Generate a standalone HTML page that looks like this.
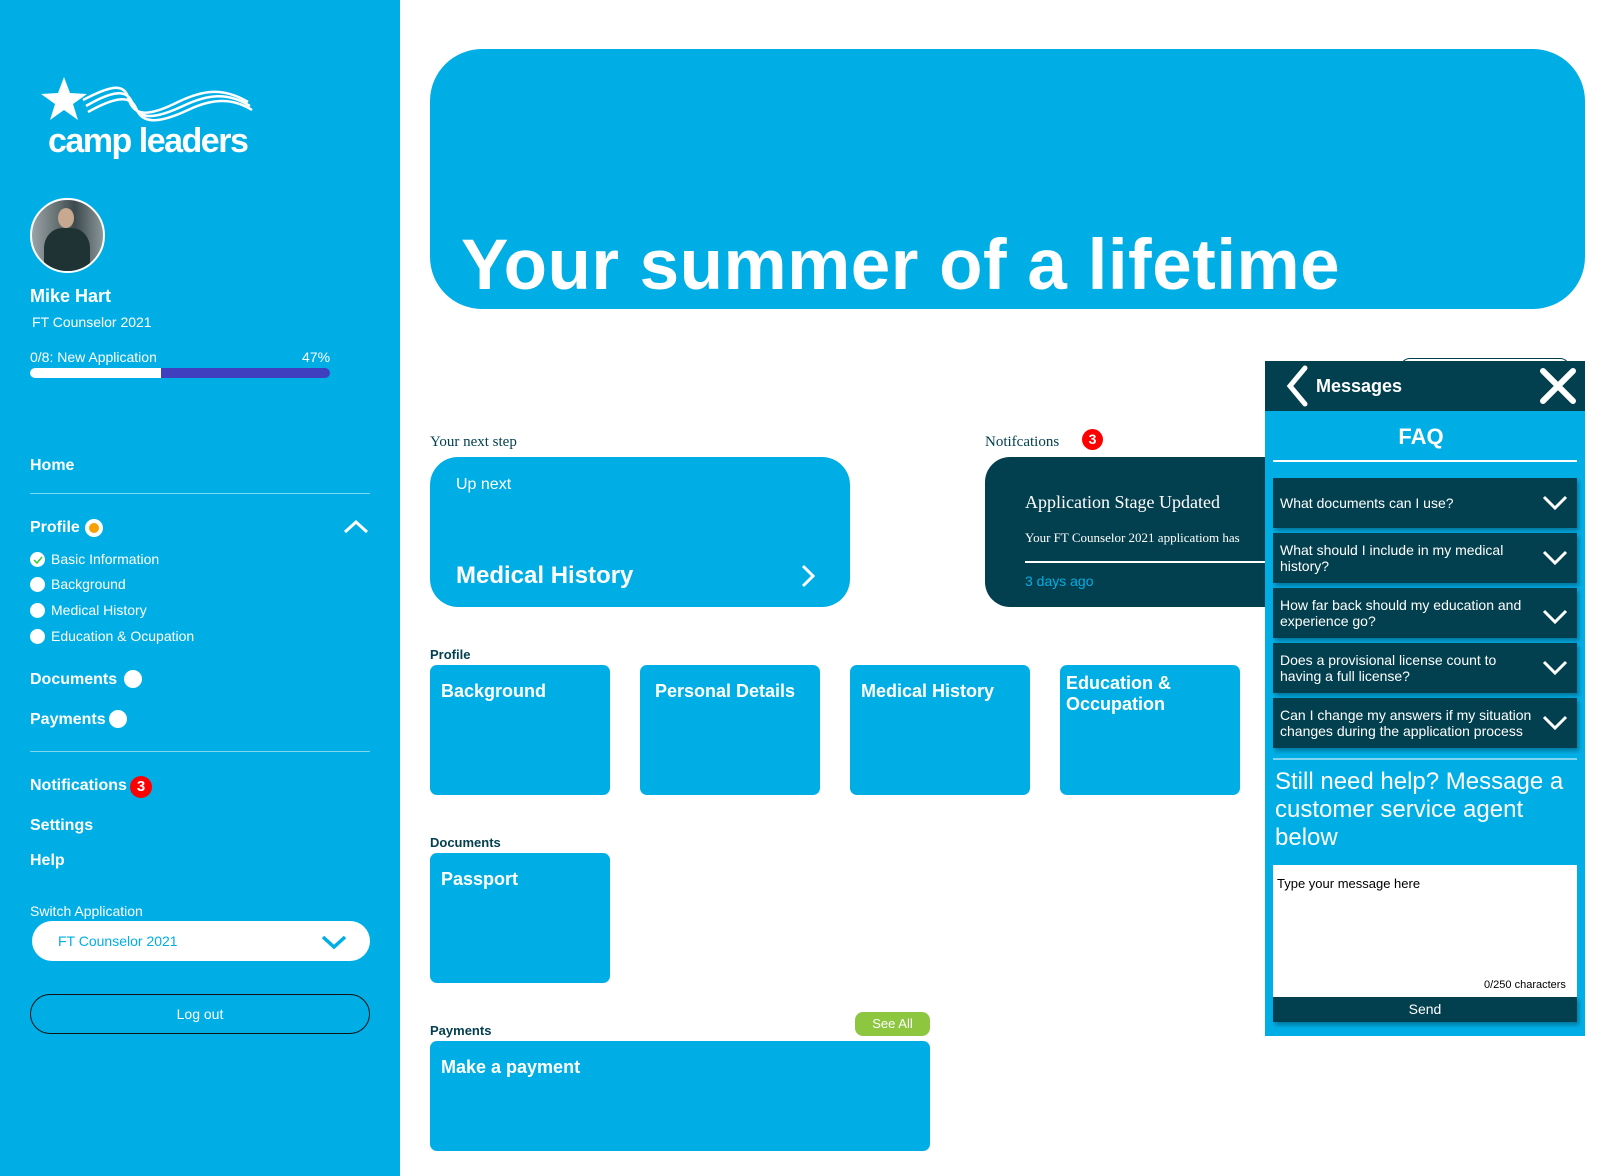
<!DOCTYPE html>
<html><head><meta charset="utf-8"><style>
*{margin:0;padding:0;box-sizing:border-box}
body{width:1615px;height:1176px;position:relative;overflow:hidden;background:#fff;font-family:"Liberation Sans",sans-serif;color:#fff}
.a{position:absolute;white-space:nowrap}
.b{color:#fff;font-weight:bold}
.blue{background:#00aee6}
.dark{background:#03404f}
.serif{font-family:"Liberation Serif",serif}
.dot{position:absolute;width:15px;height:15px;border-radius:50%;background:#fff}
.tile{position:absolute;background:#00aee6;border-radius:7px;height:130px}
.tile span{position:absolute;left:11px;top:16px;font-weight:bold;font-size:18px;line-height:21px}
.lbl{position:absolute;color:#03404f;font-weight:bold;font-size:13px}
.faq{position:absolute;left:1273px;width:304px;height:50px;background:#03404f;box-shadow:2px 3px 4px rgba(0,0,0,.3);font-size:14px;line-height:16px;padding-left:7px;display:flex;align-items:center}
.faq svg{position:absolute;right:8px;top:16px}
</style></head><body>
<div class="a blue" style="left:0;top:0;width:400px;height:1176px"></div>
<!-- logo -->
<svg class="a" style="left:38px;top:72px" width="220" height="95" viewBox="0 0 220 95">
<polygon points="26,5 32,21 49,22 35,32 40,48 26,38 12,48 17,32 3,22 20,21" fill="#fff"/>
<g fill="none" stroke="#fff" stroke-width="2.5">
<path d="M45,28 C70,15 85,10 90,25 C95,45 110,45 140,30 C165,18 185,15 210,30"/>
<path d="M48,34 C72,20 88,16 94,30 C100,48 115,48 145,34 C170,22 190,20 212,34"/>
<path d="M50,40 C75,26 92,22 98,36 C104,52 120,52 150,38 C175,26 195,26 214,38"/>
</g>
<text x="10" y="80" font-family="Liberation Sans" font-weight="bold" font-size="34" fill="#fff" letter-spacing="-1.5">camp leaders</text>
</svg>
<div class="a" style="left:30px;top:198px;width:75px;height:75px;border-radius:50%;border:2px solid #fff;overflow:hidden;background:linear-gradient(90deg,#9aa3a5,#5e6a6c 40%,#3d4a4d 60%,#8a9698)">
<div style="position:absolute;left:26px;top:8px;width:16px;height:20px;border-radius:50%;background:#c8a890"></div>
<div style="position:absolute;left:12px;top:28px;width:46px;height:50px;border-radius:40% 40% 0 0;background:#1f3234"></div>
</div>
<div class="a b" style="left:30px;top:286px;font-size:18px">Mike Hart</div>
<div class="a" style="left:32px;top:314px;font-size:14px">FT Counselor 2021</div>
<div class="a" style="left:30px;top:349px;font-size:14px">0/8: New Application</div>
<div class="a" style="left:302px;top:349px;font-size:14px">47%</div>
<div class="a" style="left:30px;top:368px;width:300px;height:10px;border-radius:5px;background:#3f3fbf"></div>
<div class="a" style="left:30px;top:368px;width:131px;height:10px;border-radius:5px 0 0 5px;background:#fff"></div>
<div class="a b" style="left:30px;top:457px;font-size:16px">Home</div>
<div class="a" style="left:30px;top:493px;width:340px;height:1px;background:#7fd6f2"></div>
<div class="a b" style="left:30px;top:519px;font-size:16px">Profile</div>
<div class="a" style="left:85px;top:519px;width:18px;height:18px;border-radius:50%;background:#fff"></div>
<div class="a" style="left:89px;top:523px;width:10px;height:10px;border-radius:50%;background:#f7a100"></div>
<svg class="a" style="left:343px;top:519px" width="26" height="16"><path d="M2,13 L13,3 L24,13" fill="none" stroke="#fff" stroke-width="3"/></svg>
<div class="dot" style="left:30px;top:552px"></div>
<svg class="a" style="left:33px;top:555px" width="10" height="10"><path d="M1,5 L4,8 L9,2" fill="none" stroke="#3c3" stroke-width="1.5"/></svg>
<div class="a" style="left:51px;top:551px;font-size:14px">Basic Information</div>
<div class="dot" style="left:30px;top:577px"></div><div class="a" style="left:51px;top:576px;font-size:14px">Background</div>
<div class="dot" style="left:30px;top:603px"></div><div class="a" style="left:51px;top:602px;font-size:14px">Medical History</div>
<div class="dot" style="left:30px;top:629px"></div><div class="a" style="left:51px;top:628px;font-size:14px">Education &amp; Ocupation</div>
<div class="a b" style="left:30px;top:671px;font-size:16px">Documents</div>
<div class="a" style="left:124px;top:670px;width:18px;height:18px;border-radius:50%;background:#fff"></div>
<div class="a b" style="left:30px;top:711px;font-size:16px">Payments</div>
<div class="a" style="left:109px;top:710px;width:18px;height:18px;border-radius:50%;background:#fff"></div>
<div class="a" style="left:30px;top:751px;width:340px;height:1px;background:#7fd6f2"></div>
<div class="a b" style="left:30px;top:777px;font-size:16px">Notifications</div>
<div class="a b" style="left:130px;top:776px;width:22px;height:22px;border-radius:50%;background:#f00;font-size:15px;text-align:center;line-height:22px">3</div>
<div class="a b" style="left:30px;top:817px;font-size:16px">Settings</div>
<div class="a b" style="left:30px;top:852px;font-size:16px">Help</div>
<div class="a" style="left:30px;top:903px;font-size:14px">Switch Application</div>
<div class="a" style="left:32px;top:921px;width:338px;height:40px;border-radius:20px;background:#fff"></div>
<div class="a" style="left:58px;top:933px;font-size:14px;color:#00aee6">FT Counselor 2021</div>
<svg class="a" style="left:321px;top:934px" width="26" height="16"><path d="M2,3 L13,13 L24,3" fill="none" stroke="#00aee6" stroke-width="3.5"/></svg>
<div class="a" style="left:30px;top:994px;width:340px;height:40px;border-radius:20px;border:1.5px solid #111"></div>
<div class="a" style="left:30px;top:1006px;width:340px;text-align:center;font-size:14px">Log out</div>

<!-- main -->
<div class="a blue" style="left:430px;top:49px;width:1155px;height:260px;border-radius:52px"></div>
<div class="a b" style="left:461px;top:225px;font-size:71px;letter-spacing:0.5px">Your summer of a lifetime</div>

<div class="a serif" style="left:430px;top:434px;font-size:15px;color:#03404f">Your next step</div>
<div class="a blue" style="left:430px;top:457px;width:420px;height:150px;border-radius:28px"></div>
<div class="a" style="left:456px;top:476px;font-size:16px">Up next</div>
<div class="a b" style="left:456px;top:562px;font-size:24px">Medical History</div>
<svg class="a" style="left:800px;top:563px" width="16" height="26"><path d="M3,3 L13,13 L3,23" fill="none" stroke="#fff" stroke-width="3"/></svg>

<div class="a serif" style="left:985px;top:434px;font-size:15px;color:#03404f">Notifcations</div>
<div class="a b" style="left:1082px;top:429px;width:21px;height:21px;border-radius:50%;background:#f00;font-size:14px;text-align:center;line-height:21px">3</div>
<div class="a dark" style="left:985px;top:457px;width:320px;height:150px;border-radius:25px"></div>
<div class="a serif" style="left:1025px;top:492px;font-size:18px">Application Stage Updated</div>
<div class="a serif" style="left:1025px;top:530px;font-size:13px">Your FT Counselor 2021 applicatiom has</div>
<div class="a" style="left:1025px;top:561px;width:250px;height:1.5px;background:#fff"></div>
<div class="a" style="left:1025px;top:573px;font-size:14px;color:#00aee6">3 days ago</div>

<div class="lbl" style="left:430px;top:647px">Profile</div>
<div class="tile" style="left:430px;top:665px;width:180px"><span>Background</span></div>
<div class="tile" style="left:640px;top:665px;width:180px"><span style="left:15px">Personal Details</span></div>
<div class="tile" style="left:850px;top:665px;width:180px"><span>Medical History</span></div>
<div class="tile" style="left:1060px;top:665px;width:180px"><span style="top:8px;left:6px">Education &amp;<br>Occupation</span></div>

<div class="lbl" style="left:430px;top:835px">Documents</div>
<div class="tile" style="left:430px;top:853px;width:180px"><span>Passport</span></div>

<div class="lbl" style="left:430px;top:1023px">Payments</div>
<div class="a" style="left:855px;top:1012px;width:75px;height:24px;border-radius:8px;background:#8dc63f;font-size:13px;text-align:center;line-height:24px">See All</div>
<div class="tile" style="left:430px;top:1041px;width:500px;height:110px"><span>Make a payment</span></div>

<!-- messages panel -->
<div class="a" style="left:1400px;top:358px;width:170px;height:20px;border:1.5px solid #03404f;border-radius:10px 10px 0 0"></div>
<div class="a blue" style="left:1265px;top:361px;width:320px;height:675px"></div>
<div class="a dark" style="left:1265px;top:361px;width:320px;height:50px"></div>
<svg class="a" style="left:1283px;top:364px" width="28" height="44"><path d="M22,4 L7,22 L22,40" fill="none" stroke="#fff" stroke-width="5" stroke-linecap="round"/></svg>
<div class="a b" style="left:1316px;top:376px;font-size:18px">Messages</div>
<svg class="a" style="left:1538px;top:366px" width="40" height="40"><path d="M5,5 L35,35 M35,5 L5,35" stroke="#fff" stroke-width="6" stroke-linecap="round"/></svg>
<div class="a b" style="left:1261px;top:424px;width:320px;text-align:center;font-size:22px">FAQ</div>
<div class="a" style="left:1273px;top:460px;width:304px;height:1.5px;background:#fff"></div>
<div class="faq" style="top:478px">What documents can I use?<svg width="28" height="18"><path d="M3,3 L14,14 L25,3" fill="none" stroke="#fff" stroke-width="3"/></svg></div>
<div class="faq" style="top:533px">What should I include in my medical<br>history?<svg width="28" height="18"><path d="M3,3 L14,14 L25,3" fill="none" stroke="#fff" stroke-width="3"/></svg></div>
<div class="faq" style="top:588px">How far back should my education and<br>experience go?<svg width="28" height="18" style="top:20px"><path d="M3,3 L14,14 L25,3" fill="none" stroke="#fff" stroke-width="3"/></svg></div>
<div class="faq" style="top:643px">Does a provisional license count to<br>having a full license?<svg width="28" height="18"><path d="M3,3 L14,14 L25,3" fill="none" stroke="#fff" stroke-width="3"/></svg></div>
<div class="faq" style="top:698px">Can I change my answers if my situation<br>changes during the application process<svg width="28" height="18"><path d="M3,3 L14,14 L25,3" fill="none" stroke="#fff" stroke-width="3"/></svg></div>
<div class="a" style="left:1273px;top:758px;width:304px;height:1.5px;background:#7fd6f2"></div>
<div class="a" style="left:1275px;top:768px;font-size:24px;line-height:28px;white-space:normal;width:300px">Still need help? Message a customer service agent below</div>
<div class="a" style="left:1273px;top:865px;width:304px;height:132px;background:#fff"></div>
<div class="a" style="left:1277px;top:876px;font-size:13px;color:#000">Type your message here</div>
<div class="a" style="left:1484px;top:979px;font-size:11px;color:#000">0/250 characters</div>
<div class="a dark" style="left:1273px;top:997px;width:304px;height:25px;box-shadow:2px 3px 4px rgba(0,0,0,.3);font-size:14px;text-align:center;line-height:25px">Send</div>
</body></html>
